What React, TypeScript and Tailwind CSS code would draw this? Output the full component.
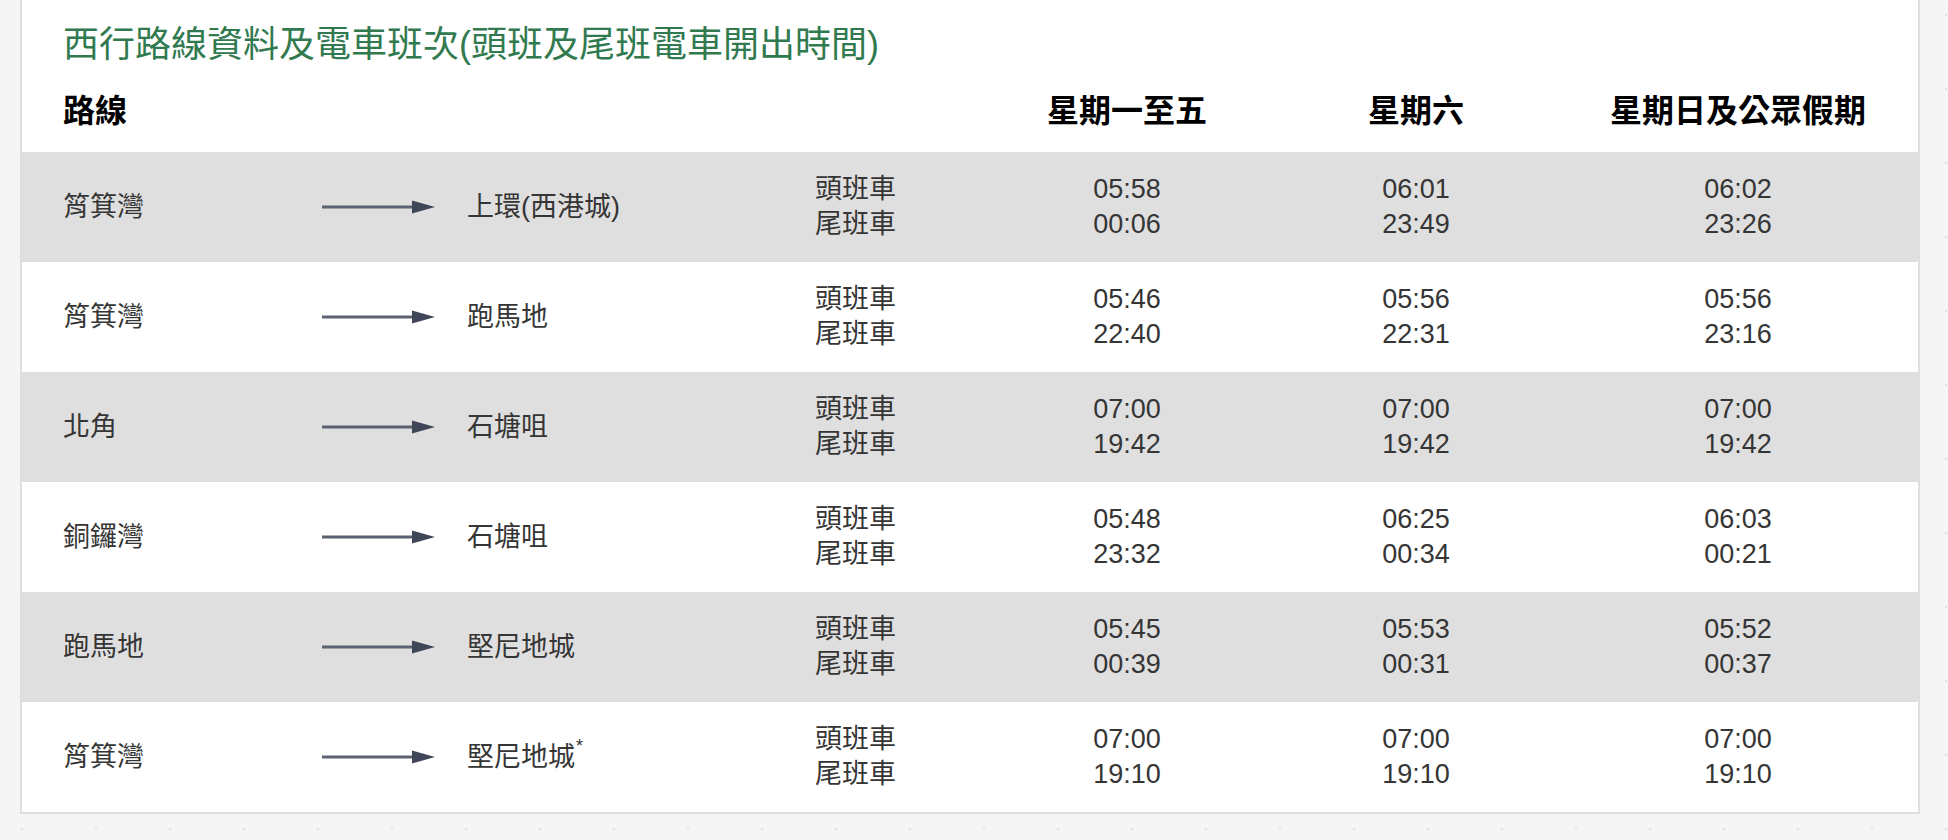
import React from "react";

// ─── Types ────────────────────────────────────────────────────────────────────

interface Route {
  from: string;
  to: string;
  star?: boolean;
  weekday: [string, string];
  sat: [string, string];
  sun: [string, string];
}

// ─── Data ─────────────────────────────────────────────────────────────────────

const ROUTES: Route[] = [
  { from: "筲箕灣", to: "上環(西港城)", weekday: ["05:58", "00:06"], sat: ["06:01", "23:49"], sun: ["06:02", "23:26"] },
  { from: "筲箕灣", to: "跑馬地", weekday: ["05:46", "22:40"], sat: ["05:56", "22:31"], sun: ["05:56", "23:16"] },
  { from: "北角", to: "石塘咀", weekday: ["07:00", "19:42"], sat: ["07:00", "19:42"], sun: ["07:00", "19:42"] },
  { from: "銅鑼灣", to: "石塘咀", weekday: ["05:48", "23:32"], sat: ["06:25", "00:34"], sun: ["06:03", "00:21"] },
  { from: "跑馬地", to: "堅尼地城", weekday: ["05:45", "00:39"], sat: ["05:53", "00:31"], sun: ["05:52", "00:37"] },
  { from: "筲箕灣", to: "堅尼地城", star: true, weekday: ["07:00", "19:10"], sat: ["07:00", "19:10"], sun: ["07:00", "19:10"] },
];

const gridCols = "grid grid-cols-[300px_113px_380px_165px_294px_284px_360px]";
const font = "font-['Liberation_Sans','Noto_Sans_CJK_TC',sans-serif]";

// ─── Arrow ────────────────────────────────────────────────────────────────────

function Arrow() {
  return (
    <svg width="113" height="14" viewBox="0 0 113 14" className="block">
      <rect x="0" y="5.5" width="92" height="3" fill="#5b6170" />
      <path d="M90 0.5 L113 7 L90 13.5 Z" fill="#3f4657" />
    </svg>
  );
}

function Times({ pair }: { pair: [string, string] }) {
  return (
    <div className="flex flex-col items-center justify-center text-[27px] leading-[35px]">
      <span>{pair[0]}</span>
      <span>{pair[1]}</span>
    </div>
  );
}

// ─── Row ──────────────────────────────────────────────────────────────────────

function RouteRow({ r, shaded }: { r: Route; shaded: boolean }) {
  return (
    <div className={`${gridCols} h-[110px] text-[#353535] ${shaded ? "bg-[#dfdfdf]" : "bg-white"}`}>
      <div className="flex items-center pl-[41px] text-[27px]">{r.from}</div>
      <div className="flex items-center">
        <Arrow />
      </div>
      <div className="flex items-center pl-[32px] text-[27px]">
        {r.to}
        {r.star && <sup className="text-[18px] -top-[0.6em] ml-[1px]">*</sup>}
      </div>
      <div className="flex flex-col justify-center text-[27px] leading-[35px]">
        <span>頭班車</span>
        <span>尾班車</span>
      </div>
      <Times pair={r.weekday} />
      <Times pair={r.sat} />
      <Times pair={r.sun} />
    </div>
  );
}

// ─── Page ─────────────────────────────────────────────────────────────────────

export default function App() {
  return (
    <main
      className={`${font} min-h-[840px] w-[1948px] bg-[#f5f5f5] bg-[radial-gradient(circle,#e1e1e1_1.2px,transparent_1.6px)] bg-[length:74px_74px] bg-[position:-15px_-22px]`}
    >
      <div className="ml-[20px] w-[1900px] bg-white border-x-2 border-b-2 border-[#dedede]">
        <div className="pt-[23px] pb-[19px]">
          <h2 className="pl-[41px] h-[44px] text-[36px] leading-[44px] text-[#317a50] font-normal">
            西行路線資料及電車班次(頭班及尾班電車開出時間)
          </h2>
          <div className={`${gridCols} mt-[22px] h-[44px] text-[32px] leading-[44px] font-bold text-black`}>
            <div className="pl-[41px]">路線</div>
            <div />
            <div />
            <div />
            <div className="text-center">星期一至五</div>
            <div className="text-center">星期六</div>
            <div className="text-center">星期日及公眾假期</div>
          </div>
        </div>
        {ROUTES.map((r, i) => (
          <RouteRow key={i} r={r} shaded={i % 2 === 0} />
        ))}
      </div>
    </main>
  );
}
